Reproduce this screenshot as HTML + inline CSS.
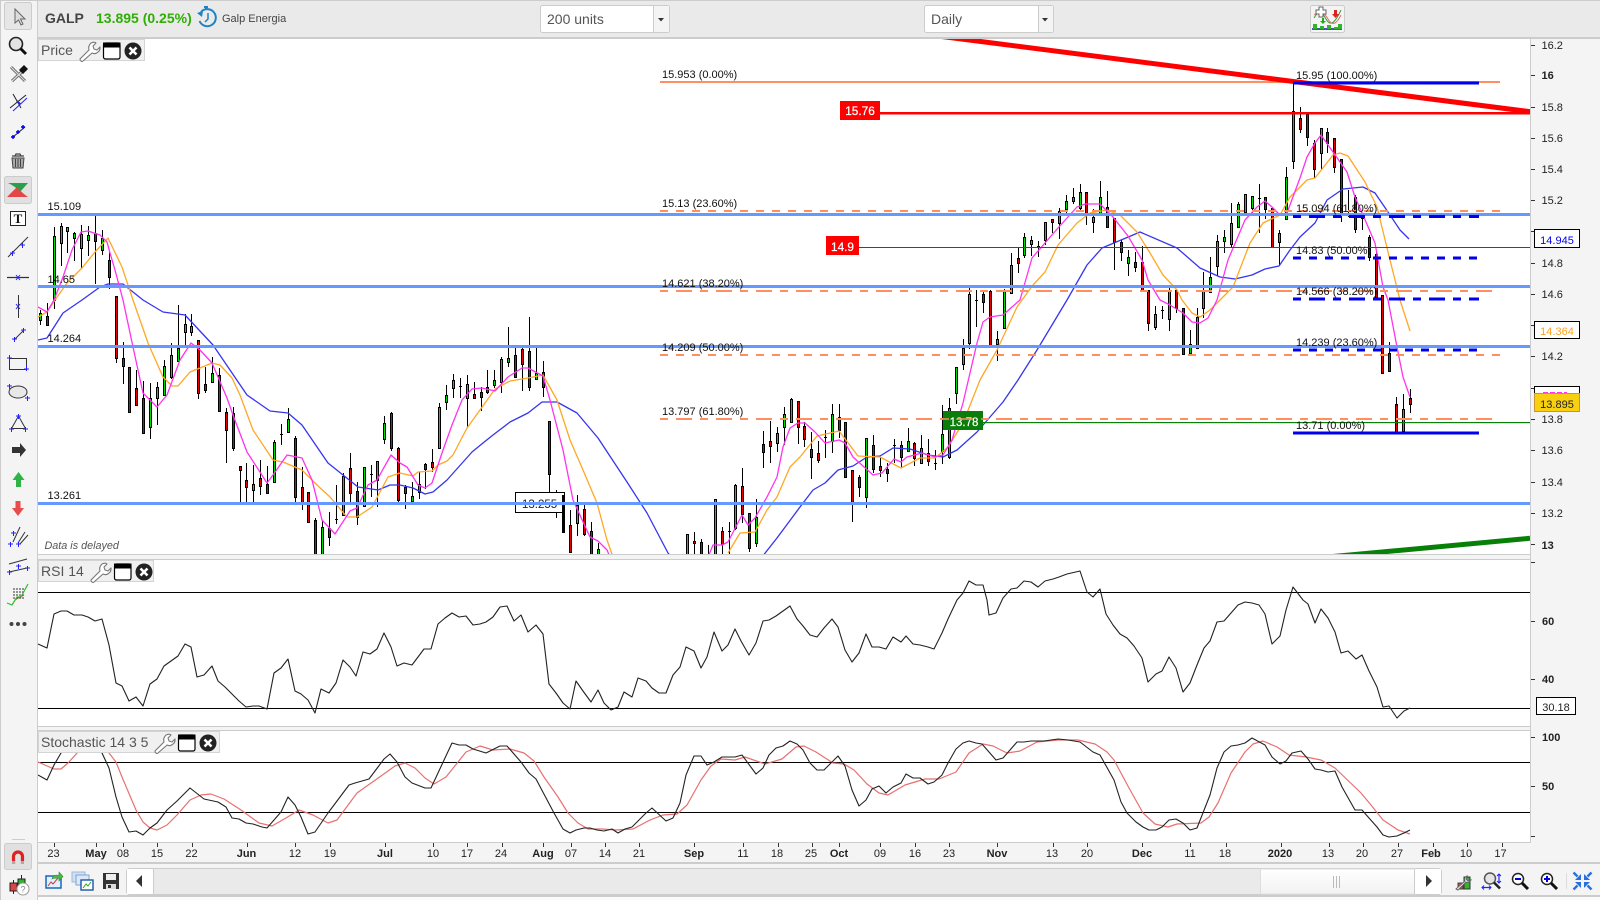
<!DOCTYPE html>
<html><head><meta charset="utf-8"><title>GALP</title>
<style>html,body{margin:0;padding:0;background:#fff;width:1600px;height:900px;overflow:hidden}svg{display:block}text{font-family:"Liberation Sans",sans-serif}</style></head>
<body>
<svg width="1600" height="900" viewBox="0 0 1600 900" xmlns="http://www.w3.org/2000/svg">
<defs>
<clipPath id="cp"><rect x="38" y="39" width="1492" height="515"/></clipPath>
<clipPath id="cs"><rect x="38" y="731" width="1493" height="111"/></clipPath>
<linearGradient id="thumb" x1="0" y1="0" x2="0" y2="1"><stop offset="0" stop-color="#fff"/><stop offset="1" stop-color="#f2f2f2"/></linearGradient>
</defs>
<rect width="1600" height="900" fill="#f4f4f4"/>
<!-- top bar -->
<rect x="38" y="0" width="1562" height="37" fill="#eaeaea"/>
<rect x="0" y="0" width="1600" height="1" fill="#ccc"/>
<rect x="38" y="37" width="1562" height="2" fill="#ccc"/>
<text x="45" y="23" font-size="14" font-weight="bold" fill="#444">GALP</text>
<text x="96" y="23" font-size="14" font-weight="bold" fill="#2fae05">13.895 (0.25%)</text>
<g fill="none" stroke="#1c84c6" stroke-width="2"><path d="M201 12a8.500 8.500 0 1 1-1.500 9"/><path d="M208 13v6l-3 3" stroke-width="1.500"/><path d="M204 7h4M206 7v3"/></g><path d="M197 13l5 4 1-6z" fill="#1c84c6"/>
<text x="222" y="22" font-size="11" fill="#444">Galp Energia</text>
<!-- selects -->
<rect x="540.500" y="5.500" width="129" height="27" rx="2" fill="#fff" stroke="#ccc"/><rect x="653.500" y="6" width="15.500" height="26" fill="#f4f4f4"/><path d="M653.500 5.500v27" stroke="#ccc"/><path d="M658 18h6l-3 3.500z" fill="#333"/>
<text x="547" y="24" font-size="14" fill="#555">200 units</text>
<rect x="924.500" y="5.500" width="129" height="27" rx="2" fill="#fff" stroke="#ccc"/><rect x="1038.500" y="6" width="14.500" height="26" fill="#f4f4f4"/><path d="M1038.500 5.500v27" stroke="#ccc"/><path d="M1042 18h6l-3 3.500z" fill="#333"/>
<text x="931" y="24" font-size="14" fill="#555">Daily</text>
<rect x="1310.500" y="5.500" width="34" height="27" rx="2" fill="#f4f4f4" stroke="#ccc"/>
<path d="M1312 29h30" stroke="#1a1a9a" stroke-width="1.500"/>
<path d="M1313 24h4v5h-4zM1320 26h4v3h-4zM1327 25h4v4h-4zM1334 27h4v2h-4zM1338 24h4v5h-4z" fill="#2db52d"/>
<path d="M1314 18c6-10 8-6 12 1s8 6 15-9" fill="none" stroke="#3a9a3a"/><path d="M1314 15c6-5 10-3 14 4s8 6 13-4" fill="none" stroke="#e87070"/>
<path d="M1316 10h3v-3h4v3h3v4h-3v3h-4v-3h-3z" fill="#fff" stroke="#666"/>
<path d="M1334 10h3v4h2l-3.500 4-3.500-4h2z" fill="#d22"/><path d="M1323 24l-3-3h2v-3h2v3h2z" fill="#2a2"/>
<!-- chart area -->
<rect x="38" y="39" width="1493" height="515" fill="#fff"/>
<g clip-path="url(#cp)">
<g shape-rendering="crispEdges" stroke="#000" stroke-width="1">
<path fill="none" d="M40.500 310V325M47.500 303V326M54.500 227V309M61.500 223V266M67.500 227V253M74.500 232V261M81.500 225V269M88.500 226V256M95.500 216V284M102.500 230V255M109.500 252V289M116.500 296V363M123.500 342V384M129.500 367V413M136.500 370V405M143.500 381V434M150.500 383V439M157.500 382V425M164.500 360V395M171.500 343V379M178.500 305V361M185.500 314V348M191.500 314V336M198.500 340V399M205.500 367V393M212.500 357V382M219.500 368V411M226.500 408V463M233.500 407V451M240.500 466V502M246.500 463V502M253.500 465V502M260.500 460V495M267.500 466V493M274.500 440V483M281.500 424V445M288.500 408V433M295.500 436V502M302.500 467V510M308.500 492V522M315.500 518V554M322.500 521V554M329.500 512V546M336.500 485V524M343.500 473V515M350.500 453V502M357.500 482V525M364.500 467V506M371.500 465V497M377.500 461V507M384.500 416V444M391.500 412V451M398.500 447V502M405.500 485V509M412.500 482V503M419.500 472V499M425.500 463V489M432.500 449V472M439.500 403V448M446.500 385V410M453.500 374V398M460.500 378V398M467.500 375V428M474.500 382V398M481.500 387V411M487.500 370V394M494.500 370V388M501.500 357V393M508.500 327V367M515.500 348V377M522.500 346V391M529.500 317V391M536.500 348V380M543.500 361V397M549.500 421V500M556.500 490V518M563.500 495V532M570.500 510V552M577.500 495V536M584.500 502V536M591.500 522V554M598.500 543V554M687.500 534V554M694.500 532V554M701.500 539V554M708.500 545V554M715.500 499V554M722.500 527V554M729.500 522V554M735.500 484V530M742.500 468V523M749.500 513V552M756.500 499V547M763.500 431V468M770.500 421V463M777.500 427V452M784.500 407V445M791.500 398V423M798.500 401V444M804.500 422V447M811.500 432V479M818.500 441V463M825.500 430V458M832.500 404V453M839.500 404V438M845.500 422V477M852.500 470V522M859.500 475V497M866.500 438V508M873.500 435V473M880.500 457V477M887.500 463V482M894.500 439V463M901.500 441V468M908.500 428V452M914.500 442V466M921.500 435V463M928.500 439V466M935.500 450V470M942.500 405V464M949.500 398V459M956.500 367V404M963.500 339V370M969.500 288V349M976.500 290V327M983.500 290V313M990.500 290V345M997.500 331V361M1004.500 289V328M1011.500 253V294M1018.500 248V273M1024.500 233V258M1031.500 236V256M1038.500 241V257M1045.500 222V245M1052.500 219V233M1059.500 208V239M1066.500 195V213M1073.500 188V204M1080.500 184V212M1086.500 192V225M1093.500 209V233M1100.500 181V213M1107.500 191V228M1114.500 218V270M1121.500 240V261M1128.500 250V276M1135.500 252V272M1142.500 246V289M1148.500 290V331M1155.500 306V330M1162.500 306V319M1169.500 288V331M1176.500 290V313M1183.500 308V355M1190.500 330V353M1197.500 308V349M1203.500 272V318M1210.500 257V292M1217.500 235V276M1224.500 230V253M1231.500 203V247M1238.500 202V227M1245.500 194V212M1252.500 196V213M1259.500 184V233M1265.500 197V219M1272.500 208V247M1279.500 230V266M1286.500 167V220M1293.500 82V169M1300.500 107V133M1307.500 113V146M1314.500 140V178M1321.500 128V169M1327.500 128V153M1334.500 138V173M1341.500 159V222M1348.500 190V217M1355.500 195V233M1362.500 217V230M1369.500 235V261M1376.500 252V297M1382.500 295V373M1389.500 342V372M1396.500 397V432M1403.500 394V431M1410.500 389V413"/>
<path fill="none" d="M280 434.500h3M335 519.500h3M370 474.500h3M459 386.500h3M555 494.500h3M728 531.500h3M824 437.500h3M893 445.500h3M934 463.500h3M975 300.500h3M1037 246.500h3M1161 310.500h3M1258 198.500h3M1347 213.500h3M1361 218.500h3"/>
<path fill="#00dd00" d="M39.500 313.500h2v7h-2zM53.500 236.500h2v64h-2zM60.500 226.500h2v17h-2zM66.500 227.500h2v4h-2zM73.500 233.500h2v5h-2zM80.500 234.500h2v14h-2zM87.500 235.500h2v5h-2zM101.500 238.500h2v12h-2zM149.500 398.500h2v29h-2zM156.500 387.500h2v11h-2zM163.500 366.500h2v29h-2zM170.500 355.500h2v22h-2zM177.500 348.500h2v13h-2zM184.500 324.500h2v8h-2zM190.500 326.500h2v6h-2zM211.500 373.500h2v9h-2zM252.500 484.500h2v6h-2zM273.500 442.500h2v40h-2zM287.500 419.500h2v13h-2zM321.500 527.500h2v27h-2zM342.500 476.500h2v39h-2zM363.500 467.500h2v39h-2zM376.500 461.500h2v19h-2zM383.500 423.500h2v16h-2zM411.500 496.500h2v5h-2zM418.500 484.500h2v8h-2zM438.500 407.500h2v41h-2zM445.500 395.500h2v7h-2zM452.500 380.500h2v8h-2zM466.500 384.500h2v14h-2zM493.500 380.500h2v5h-2zM500.500 359.500h2v23h-2zM507.500 358.500h2v4h-2zM535.500 373.500h2v6h-2zM576.500 505.500h2v18h-2zM597.500 549.500h2v5h-2zM686.500 534.500h2v20h-2zM714.500 499.500h2v55h-2zM734.500 485.500h2v43h-2zM755.500 517.500h2v26h-2zM776.500 433.500h2v10h-2zM783.500 414.500h2v13h-2zM790.500 399.500h2v23h-2zM831.500 414.500h2v27h-2zM865.500 438.500h2v59h-2zM907.500 441.500h2v10h-2zM920.500 448.500h2v15h-2zM941.500 434.500h2v17h-2zM948.500 408.500h2v49h-2zM955.500 367.500h2v26h-2zM962.500 348.500h2v16h-2zM968.500 294.500h2v49h-2zM996.500 339.500h2v5h-2zM1003.500 290.500h2v38h-2zM1010.500 265.500h2v28h-2zM1023.500 237.500h2v18h-2zM1030.500 240.500h2v4h-2zM1044.500 222.500h2v18h-2zM1058.500 211.500h2v12h-2zM1065.500 201.500h2v8h-2zM1072.500 197.500h2v4h-2zM1079.500 192.500h2v16h-2zM1092.500 217.500h2v5h-2zM1099.500 197.500h2v16h-2zM1127.500 257.500h2v6h-2zM1154.500 314.500h2v13h-2zM1168.500 290.500h2v29h-2zM1189.500 344.500h2v9h-2zM1196.500 317.500h2v31h-2zM1202.500 290.500h2v18h-2zM1209.500 277.500h2v15h-2zM1216.500 241.500h2v25h-2zM1223.500 237.500h2v4h-2zM1230.500 223.500h2v21h-2zM1237.500 204.500h2v23h-2zM1244.500 194.500h2v18h-2zM1251.500 196.500h2v12h-2zM1278.500 233.500h2v9h-2zM1285.500 177.500h2v42h-2zM1292.500 111.500h2v50h-2zM1320.500 128.500h2v25h-2zM1402.500 409.500h2v22h-2z"/>
<path fill="#e80000" d="M46.500 316.500h2v9h-2zM94.500 233.500h2v8h-2zM108.500 260.500h2v17h-2zM115.500 296.500h2v62h-2zM122.500 358.500h2v8h-2zM128.500 367.500h2v45h-2zM135.500 388.500h2v17h-2zM142.500 398.500h2v35h-2zM197.500 340.500h2v53h-2zM204.500 384.500h2v6h-2zM218.500 375.500h2v36h-2zM225.500 412.500h2v18h-2zM232.500 413.500h2v35h-2zM239.500 466.500h2v4h-2zM245.500 480.500h2v7h-2zM259.500 478.500h2v8h-2zM266.500 484.500h2v9h-2zM294.500 438.500h2v59h-2zM301.500 487.500h2v16h-2zM307.500 492.500h2v30h-2zM314.500 520.500h2v34h-2zM328.500 528.500h2v9h-2zM349.500 468.500h2v25h-2zM356.500 491.500h2v26h-2zM390.500 413.500h2v35h-2zM397.500 448.500h2v52h-2zM404.500 487.500h2v6h-2zM424.500 464.500h2v5h-2zM431.500 462.500h2v5h-2zM473.500 394.500h2v4h-2zM480.500 392.500h2v5h-2zM486.500 387.500h2v5h-2zM514.500 355.500h2v22h-2zM521.500 349.500h2v15h-2zM528.500 351.500h2v36h-2zM542.500 372.500h2v15h-2zM548.500 421.500h2v53h-2zM562.500 495.500h2v37h-2zM569.500 525.500h2v27h-2zM583.500 509.500h2v25h-2zM590.500 531.500h2v23h-2zM693.500 541.500h2v2h-2zM700.500 542.500h2v12h-2zM721.500 531.500h2v13h-2zM741.500 486.500h2v28h-2zM748.500 513.500h2v35h-2zM762.500 444.500h2v8h-2zM769.500 441.500h2v5h-2zM797.500 401.500h2v26h-2zM803.500 426.500h2v13h-2zM810.500 449.500h2v8h-2zM817.500 453.500h2v7h-2zM838.500 417.500h2v13h-2zM844.500 422.500h2v55h-2zM851.500 470.500h2v32h-2zM858.500 477.500h2v10h-2zM872.500 445.500h2v24h-2zM879.500 466.500h2v4h-2zM886.500 469.500h2v4h-2zM900.500 445.500h2v12h-2zM913.500 443.500h2v15h-2zM927.500 453.500h2v8h-2zM982.500 294.500h2v8h-2zM989.500 291.500h2v54h-2zM1017.500 258.500h2v5h-2zM1051.500 219.500h2v3h-2zM1085.500 192.500h2v21h-2zM1106.500 207.500h2v20h-2zM1113.500 218.500h2v24h-2zM1120.500 242.500h2v10h-2zM1134.500 262.500h2v5h-2zM1141.500 262.500h2v28h-2zM1147.500 290.500h2v33h-2zM1175.500 290.500h2v18h-2zM1182.500 308.500h2v46h-2zM1264.500 197.500h2v12h-2zM1271.500 208.500h2v39h-2zM1299.500 118.500h2v11h-2zM1306.500 114.500h2v23h-2zM1313.500 143.500h2v26h-2zM1326.500 132.500h2v11h-2zM1333.500 138.500h2v29h-2zM1340.500 159.500h2v54h-2zM1354.500 197.500h2v32h-2zM1368.500 237.500h2v20h-2zM1375.500 254.500h2v43h-2zM1381.500 295.500h2v78h-2zM1388.500 353.500h2v18h-2zM1395.500 404.500h2v28h-2zM1409.500 398.500h2v6h-2z"/>
</g>
<!-- moving averages -->
<g fill="none" stroke-width="1.300" stroke-linejoin="round">
<path stroke="#3535f0" d="M38 340L47 338L63 313L82 300L100 287L108 284L123 284L143 300L163 312L185 315L213 345L247 395L270 411L288 413L302 425L328 463L343 475L358 487L378 490L390 485L400 485L413 488L425 494L433 492L447 480L472 452L483 443L493 435L510 422L528 413L542 402L557 402L577 413L598 438L627 482L647 513L668 553L672 558M762 557L777 538L800 507L813 490L825 483L838 470L853 466L867 457L880 456L893 448L910 449L928 455L943 457L957 450L977 432L1003 402L1018 380L1037 350L1067 300L1087 265L1102 248L1133 235L1140 232L1177 248L1200 268L1220 277L1235 279L1252 275L1265 269L1279 266L1290 250L1300 237L1315 223L1327 200L1343 189L1363 187L1375 193L1388 212L1400 230L1409 239"/>
<path stroke="#ffa726" d="M38 317L47 312L55 300L67 283L82 268L95 252L108 238L122 267L133 300L148 343L163 377L172 386L178 386L190 372L200 368L212 363L220 365L232 378L240 395L253 430L273 460L283 462L302 470L317 485L330 497L347 517L357 517L372 507L388 477L400 473L413 476L418 472L432 471L438 465L447 461L453 455L467 428L480 410L495 389L510 381L528 378L543 375L557 400L570 440L583 470L597 503L607 540L613 557M728 553L740 533L755 532L767 510L777 497L790 467L800 457L817 436L839 431L858 456L880 457L901 468L920 458L935 458L948 447L963 423L980 380L997 350L1017 307L1022 300L1033 285L1045 272L1058 245L1077 223L1090 213L1107 210L1120 215L1137 232L1150 253L1163 275L1177 290L1182 300L1192 313L1200 317L1210 310L1220 300L1233 287L1250 243L1263 223L1280 215L1290 197L1307 180L1315 178L1333 155L1340 153L1348 156L1365 182L1377 207L1390 260L1400 300L1410 331"/>
<path stroke="#ff33ee" d="M38 307L47 312L54 300L63 277L72 250L81 232L88 231L100 235L107 242L110 253L115 270L123 300L133 347L143 393L157 407L167 395L180 360L191 343L200 350L212 363L227 398L233 415L247 452L267 483L273 475L287 455L302 458L312 480L322 520L335 534L350 511L357 508L368 485L377 480L391 455L400 463L407 467L418 485L425 488L432 483L442 453L452 425L462 400L472 389L482 388L495 391L508 377L522 368L528 368L543 376L550 400L563 450L573 500L590 537L598 541L607 550L610 557M708 557L713 545L722 545L728 542L742 515L748 525L755 518L767 497L777 477L783 447L790 428L798 423L805 423L815 432L825 443L839 440L845 443L853 457L873 475L882 473L894 459L901 462L907 457L922 453L935 457L943 455L952 440L963 403L970 373L977 343L983 322L990 317L1003 315L1020 300L1032 258L1058 228L1077 207L1085 204L1100 204L1113 217L1128 236L1142 260L1148 280L1160 300L1170 305L1183 313L1192 322L1200 323L1208 318L1217 300L1228 260L1245 220L1257 207L1265 201L1272 207L1280 215L1287 213L1300 178L1307 157L1315 143L1321 135L1333 152L1347 172L1355 197L1363 215L1375 243L1383 287L1388 300L1397 347L1403 377L1410 397"/>
</g>
<!-- 13.255 box -->
<rect x="515.500" y="492.500" width="49" height="20" fill="#fff" stroke="#000"/>
<text x="522" y="508" font-size="11.500" fill="#222">13.255</text>
<path d="M563.500 495V532" stroke="#000"/><rect x="562" y="495" width="3" height="18" fill="#000"/>
<!-- red / green horizontal -->
<rect x="880" y="112" width="650" height="2.500" fill="#f00"/>
<rect x="859" y="247" width="671" height="1" fill="#e00"/>
<rect x="983" y="422" width="547" height="1.200" fill="#0a7d0a"/>
<!-- orange fib -->
<g fill="none" stroke="#ff8f5f" stroke-width="2">
<path d="M660 82H1500"/>
<path d="M660 211H1500" stroke-dasharray="8 8"/>
<path d="M660 291H1492" stroke-dasharray="8 8 16 8"/>
<path d="M660 355H1500" stroke-dasharray="8 8"/>
<path d="M660 419H1492" stroke-dasharray="8 8 16 8"/>
</g>
<!-- labels red green -->
<rect x="840" y="101" width="40" height="19" fill="#f00"/><text x="860" y="115" font-size="11.800" stroke="#fff" stroke-width=".25" fill="#fff" text-anchor="middle">15.76</text>
<rect x="826" y="236" width="33" height="19" fill="#f00"/><text x="842.500" y="251" font-size="11.800" stroke="#fff" stroke-width=".25" fill="#fff" text-anchor="middle">14.9</text>
<rect x="943" y="411" width="40" height="19" fill="#0a7d0a"/><text x="964" y="426" font-size="11.500" stroke="#fff" stroke-width=".2" fill="#fff" text-anchor="middle">13.78</text>
<path d="M943 419h6m8 0h16m8 0h8" stroke="#ff8f5f" stroke-width="2" opacity=".75"/>
<!-- light-blue horizontal -->
<g fill="#6699ff"><rect x="38" y="213" width="1492" height="3"/><rect x="38" y="285" width="1492" height="3"/><rect x="38" y="345" width="1492" height="3"/><rect x="38" y="502" width="1492" height="3"/></g>
<!-- trends -->
<path d="M930 35L1530 111.700" stroke="#f00" stroke-width="5" fill="none"/>
<path d="M1320 557.700L1530 538.300" stroke="#088008" stroke-width="5" fill="none"/>
<!-- blue fib -->
<g fill="none" stroke="#0000ee" stroke-width="3">
<path d="M1293 83H1479"/>
<path d="M1293 216.500H1479" stroke-dasharray="8 8 16 8"/>
<path d="M1293 258H1479" stroke-dasharray="8 8"/>
<path d="M1293 299H1479" stroke-dasharray="8 8 16 8"/>
<path d="M1293 350H1479" stroke-dasharray="8 8"/>
<path d="M1293 433H1479"/>
</g>
<!-- text labels -->
<g font-size="11" fill="#111">
<text x="47.500" y="210">15.109</text><text x="47.500" y="283">14.65</text><text x="47.500" y="342">14.264</text><text x="47.500" y="499">13.261</text>
<text x="662" y="78">15.953 (0.00%)</text><text x="662" y="207">15.13 (23.60%)</text><text x="662" y="287">14.621 (38.20%)</text><text x="662" y="351">14.209 (50.00%)</text><text x="662" y="415">13.797 (61.80%)</text>
<text x="1296" y="79">15.95 (100.00%)</text><text x="1296" y="212">15.094 (61.80%)</text><text x="1296" y="254">14.83 (50.00%)</text><text x="1296" y="295">14.566 (38.20%)</text><text x="1296" y="346">14.239 (23.60%)</text><text x="1296" y="429">13.71 (0.00%)</text>
</g>
<text x="44.500" y="549" font-size="10.800" font-style="italic" fill="#555">Data is delayed</text>
</g>
<!-- panel frames -->
<rect x="38" y="554" width="1493" height="6" fill="#f4f4f4"/>
<rect x="38" y="554" width="1493" height="1" fill="#ccc"/><rect x="38" y="559" width="1493" height="1" fill="#ccc"/>
<rect x="38" y="560" width="1493" height="166" fill="#fff"/>
<rect x="38" y="726" width="1493" height="5" fill="#f4f4f4"/>
<rect x="38" y="726" width="1493" height="1" fill="#ccc"/><rect x="38" y="730" width="1493" height="1" fill="#ccc"/>
<rect x="38" y="731" width="1493" height="111" fill="#fff"/>
<rect x="1530" y="39" width="1" height="803" fill="#ccc"/>
<rect x="37" y="0" width="1" height="900" fill="#ccc"/>
<rect x="0" y="0" width="1" height="900" fill="#ccc"/>
<!-- RSI -->
<g fill="none" stroke="#000" stroke-width="1">
<path d="M38 592.500H1530M38 708.500H1530"/>
<path stroke="#222" stroke-width="1.100" stroke-linejoin="round" d="M38 644L47 648L54 614L61 611L67 611L74 615L82 615L88 617L95 621L102 619L109 645L116 683L122 686L129 701L136 697L143 706L150 684L157 679L164 666L171 661L178 656L185 644L191 647L197 677L204 675L212 666L218 681L225 687L232 694L239 701L246 707L253 706L259 706L267 709L274 673L281 668L288 659L295 691L301 694L308 700L315 713L321 689L329 693L336 683L343 660L350 667L356 676L363 652L370 654L377 649L384 633L391 647L397 666L404 663L412 665L418 657L424 649L431 649L438 624L445 618L452 613L459 617L466 616L473 625L480 624L486 622L493 617L500 607L507 606L514 621L521 615L528 632L536 625L543 634L549 684L556 693L563 703L570 709L576 681L583 691L591 702L598 690L604 703L611 710L618 707L624 692L632 697L638 678L646 681L652 688L659 693L666 693L673 675L680 667L686 647L694 651L701 668L707 657L714 632L722 651L728 645L735 629L741 641L749 655L756 643L763 621L769 620L776 616L783 611L790 606L797 619L803 626L810 635L817 637L824 628L832 619L838 627L845 650L852 662L859 653L866 634L872 647L879 647L886 649L893 637L901 642L906 636L913 644L920 645L928 647L934 649L942 633L948 619L957 600L963 593L969 581L976 585L983 585L987 600L989 615L996 613L1003 598L1011 589L1017 588L1024 581L1031 582L1038 587L1045 581L1053 579L1059 577L1067 574L1080 571L1087 592L1093 597L1100 589L1106 614L1113 625L1120 634L1127 638L1134 646L1142 658L1148 682L1156 674L1162 671L1169 657L1176 668L1183 692L1190 683L1197 665L1204 648L1210 641L1217 622L1224 621L1231 613L1238 605L1245 602L1252 603L1259 605L1265 614L1272 644L1280 636L1286 610L1293 587L1303 600L1308 604L1315 623L1321 609L1328 618L1335 632L1341 653L1348 651L1356 659L1362 655L1369 671L1377 687L1383 707L1389 706L1397 718L1404 711L1410 708"/>
</g>
<!-- Stochastic -->
<g clip-path="url(#cs)" fill="none">
<path stroke="#000" d="M38 762.500H1530M38 812.500H1530"/>
<path stroke="#e87070" stroke-width="1.200" stroke-linejoin="round" d="M38 762L54 769L61 769L68 763L78 752L90 738L100 742L109 753L116 762L122 777L136 810L143 822L150 828L157 830L167 825L177 815L190 800L201 795L211 794L224 799L241 810L259 823L272 826L286 818L299 810L313 815L328 823L337 820L357 793L381 776L395 766L405 763L415 768L425 778L434 784L446 777L466 752L480 746L493 750L510 749L524 753L534 761L544 777L558 797L568 813L578 823L588 829L602 829L616 830L633 829L650 820L663 815L677 814L687 805L701 780L711 766L721 759L735 760L745 757L765 764L782 759L796 747L804 746L816 752L833 763L844 764L854 770L867 784L879 793L888 795L905 785L925 779L939 779L956 772L969 753L983 744L993 746L1007 753L1020 751L1037 742L1058 740L1078 740L1095 744L1107 752L1114 760L1129 788L1143 813L1155 824L1168 827L1177 824L1201 823L1209 817L1218 803L1231 773L1245 752L1253 744L1263 741L1277 747L1289 755L1306 757L1321 760L1335 768L1361 793L1371 805L1383 820L1398 830L1410 834"/>
<path stroke="#222" stroke-width="1.100" stroke-linejoin="round" d="M38 775L47 780L54 765L61 753L68 747L80 735L90 736L99 750L102 753L109 768L116 797L122 817L129 832L136 831L143 835L150 828L157 823L167 810L177 801L190 788L204 799L218 802L226 807L232 818L239 819L246 823L253 824L262 827L267 828L281 812L288 797L295 805L301 817L308 834L315 832L328 813L349 785L355 783L369 779L384 759L390 754L397 762L405 777L412 783L425 788L431 788L452 743L459 745L466 745L473 749L486 753L500 746L507 746L521 762L529 773L536 779L554 813L563 829L570 833L576 830L584 828L590 828L597 830L604 831L612 829L618 833L625 829L632 827L646 813L652 808L666 821L673 818L680 803L686 775L694 756L701 756L707 765L714 762L722 757L735 757L742 755L756 774L763 768L769 755L776 748L783 746L790 741L797 744L803 750L810 763L817 770L824 770L832 762L838 756L845 766L852 790L859 806L866 800L872 789L879 786L886 793L893 787L901 783L906 774L913 778L920 778L928 784L934 782L942 775L948 763L956 749L963 743L969 741L976 743L982 744L996 760L1003 758L1017 742L1024 742L1031 741L1044 741L1058 739L1068 740L1080 742L1093 752L1100 755L1114 780L1121 802L1127 813L1136 822L1143 827L1149 830L1156 830L1162 827L1169 820L1176 819L1183 823L1190 830L1197 828L1210 795L1217 768L1224 752L1231 746L1238 745L1245 743L1252 738L1265 745L1272 757L1280 764L1286 761L1292 753L1301 751L1308 759L1315 769L1321 770L1328 772L1335 771L1342 787L1355 810L1362 810L1369 818L1377 827L1383 835L1389 837L1397 836L1404 833L1410 830"/>
</g>
<!-- price axis -->
<rect x="1531" y="39" width="69" height="803" fill="#f4f4f4"/>
<path stroke="#333" d="M1531 45.500h4M1531 75.500h4M1531 107.500h4M1531 138.500h4M1531 169.500h4M1531 200.500h4M1531 231.500h4M1531 263.500h4M1531 294.500h4M1531 325.500h4M1531 356.500h4M1531 388.500h4M1531 419.500h4M1531 450.500h4M1531 482.500h4M1531 513.500h4M1531 544.500h4M1531 562.500h4M1531 621.500h4M1531 679.500h4M1531 737.500h4M1531 786.500h4M1531 836.500h4"/>
<g font-size="11" fill="#222">
<text x="1541.500" y="49">16.2</text><text x="1541.500" y="79" font-weight="bold">16</text><text x="1541.500" y="111">15.8</text><text x="1541.500" y="142">15.6</text><text x="1541.500" y="173">15.4</text><text x="1541.500" y="204">15.2</text><text x="1541.500" y="267">14.8</text><text x="1541.500" y="298">14.6</text><text x="1541.500" y="360">14.2</text><text x="1541.500" y="423">13.8</text><text x="1541.500" y="454">13.6</text><text x="1541.500" y="486">13.4</text><text x="1541.500" y="517">13.2</text><text x="1541.500" y="549" font-weight="bold">13</text>
<text x="1542" y="625" font-weight="bold">60</text><text x="1542" y="683" font-weight="bold">40</text><text x="1542" y="741" font-weight="bold">100</text><text x="1542" y="790" font-weight="bold">50</text>
</g>
<rect x="1534.500" y="229.500" width="45" height="18" fill="#fff" stroke="#000"/><text x="1557" y="244" font-size="11" fill="#0000ee" text-anchor="middle">14.945</text>
<rect x="1534.500" y="321.500" width="45" height="17" fill="#fff" stroke="#000"/><text x="1557" y="335" font-size="11" fill="#ffa020" text-anchor="middle">14.364</text>
<rect x="1534.500" y="386.500" width="45" height="12" fill="#fff" stroke="#000"/><path d="M1543 393h24" stroke="#ff33ee" stroke-dasharray="5 2" stroke-width="2"/>
<rect x="1534.500" y="393.500" width="45" height="18" fill="#f8d010" stroke="#c9962e"/><text x="1557" y="408" font-size="11" fill="#222" text-anchor="middle">13.895</text>
<rect x="1536.500" y="697.500" width="39" height="17" fill="#fff" stroke="#000"/><text x="1556" y="711" font-size="11" fill="#222" text-anchor="middle">30.18</text>
<!-- x axis -->
<rect x="38" y="842" width="1562" height="20" fill="#f4f4f4"/>
<rect x="38" y="842" width="1493" height="1" fill="#ccc"/>
<rect x="38" y="862" width="1562" height="2" fill="#ccc"/>
<path stroke="#333" d="M54.500 843v4M96.500 843v4M123.500 843v4M157.500 843v4M192.500 843v4M247.500 843v4M295.500 843v4M330.500 843v4M385.500 843v4M433.500 843v4M467.500 843v4M502.500 843v4M543.500 843v4M571.500 843v4M605.500 843v4M639.500 843v4M694.500 843v4M743.500 843v4M778.500 843v4M812.500 843v4M839.500 843v4M880.500 843v4M915.500 843v4M949.500 843v4M997.500 843v4M1053.500 843v4M1087.500 843v4M1142.500 843v4M1190.500 843v4M1226.500 843v4M1281.500 843v4M1329.500 843v4M1363.500 843v4M1398.500 843v4M1433.500 843v4M1467.500 843v4M1502.500 843v4"/>
<g font-size="11" fill="#222" text-anchor="middle">
<text x="53.500" y="857">23</text><text x="96" y="857" font-weight="bold">May</text><text x="123" y="857">08</text><text x="157" y="857">15</text><text x="191.500" y="857">22</text><text x="246.500" y="857" font-weight="bold">Jun</text><text x="295" y="857">12</text><text x="330" y="857">19</text><text x="385" y="857" font-weight="bold">Jul</text><text x="433" y="857">10</text><text x="467" y="857">17</text><text x="501" y="857">24</text><text x="543" y="857" font-weight="bold">Aug</text><text x="571" y="857">07</text><text x="605" y="857">14</text><text x="639" y="857">21</text><text x="694" y="857" font-weight="bold">Sep</text><text x="743" y="857">11</text><text x="777" y="857">18</text><text x="811" y="857">25</text><text x="839" y="857" font-weight="bold">Oct</text><text x="880" y="857">09</text><text x="915" y="857">16</text><text x="949" y="857">23</text><text x="997" y="857" font-weight="bold">Nov</text><text x="1052" y="857">13</text><text x="1087" y="857">20</text><text x="1142" y="857" font-weight="bold">Dec</text><text x="1190" y="857">11</text><text x="1225" y="857">18</text><text x="1280" y="857" font-weight="bold">2020</text><text x="1328" y="857">13</text><text x="1362" y="857">20</text><text x="1397" y="857">27</text><text x="1431" y="857" font-weight="bold">Feb</text><text x="1466" y="857">10</text><text x="1500.500" y="857">17</text>
</g>
<!-- tabs -->
<g fill="#f0f0f0" stroke="#d4d4d4"><rect x="38.500" y="39.500" width="106" height="21"/><rect x="38.500" y="560.500" width="115" height="21"/><rect x="38.500" y="731.500" width="181" height="21"/></g>
<text x="41" y="55" font-size="14" fill="#555">Price</text>
<text x="41" y="576" font-size="14" fill="#555">RSI 14</text>
<text x="41" y="747" font-size="14" fill="#555">Stochastic 14 3 5</text>
<g fill="#fff" stroke="#777" stroke-width="1.100" stroke-linejoin="round">
<path d="M80 59l9-9c-1-3 0-5 2-7 2-1 4-1 5 0l-3 3 1 3 3 1 3-3c0 2 0 4-2 5-2 2-4 2-6 1l-9 8c-1 1-3 0-3-2z"/>
<path d="M91 580l9-9c-1-3 0-5 2-7 2-1 4-1 5 0l-3 3 1 3 3 1 3-3c0 2 0 4-2 5-2 2-4 2-6 1l-9 8c-1 1-3 0-3-2z"/>
<path d="M155 751l9-9c-1-3 0-5 2-7 2-1 4-1 5 0l-3 3 1 3 3 1 3-3c0 2 0 4-2 5-2 2-4 2-6 1l-9 8c-1 1-3 0-3-2z"/>
</g>
<g fill="#fff" stroke="#000" stroke-width="1.200"><rect x="103.500" y="43" width="16.500" height="16" rx="2"/><rect x="114.500" y="564" width="16.500" height="16" rx="2"/><rect x="178.500" y="735" width="16.500" height="16" rx="2"/></g>
<g fill="#000"><rect x="103" y="42.500" width="17.500" height="5"/><rect x="114" y="563.500" width="17.500" height="5"/><rect x="178" y="734.500" width="17.500" height="5"/></g>
<g fill="#222"><circle cx="133" cy="51" r="8.500"/><circle cx="144" cy="572" r="8.500"/><circle cx="208" cy="743" r="8.500"/></g>
<g stroke="#fff" stroke-width="2.600"><path d="M129.500 47.500l7 7m0-7l-7 7M140.500 568.500l7 7m0-7l-7 7M204.500 739.500l7 7m0-7l-7 7"/></g>
<!-- sidebar icons -->
<rect x="4.500" y="2.500" width="27" height="27" rx="2" fill="#e6e6e6" stroke="#ccc"/>
<path d="M15 9V23L18.500 20L21 25L23 24L20.500 19H25Z" fill="#ddd" stroke="#666"/>
<circle cx="16" cy="44" r="6.500" fill="#e4e4e4" stroke="#222" stroke-width="1.600"/><path d="M20.500 48.500L26 54" stroke="#111" stroke-width="3"/>
<path d="M11 67l14 14M26 68L12 81" stroke="#666" stroke-width="3"/><path d="M11 67l14 14M26 68L12 81" stroke="#ddd" stroke-width="1.200"/><path d="M19 70l5-5 4 4-5 5z" fill="#111"/>
<path d="M10 108L26 95M13 94l8 14" stroke="#222" fill="none"/><path d="M13 111L27 98" stroke="#22f"/><path d="M17 101l3 3" stroke="#22f" stroke-width="2"/>
<path d="M13 137L25 127" stroke="#222"/><path d="M11 137h4M13 135v4M16 132h4M18 130v4M21 127h4M23 125v4" stroke="#00e" stroke-width="1.400"/>
<path d="M12 156h12M15 156l1-2h4l1 2" stroke="#444" fill="none" stroke-width="1.300"/><path d="M12 158h12l-1 10h-10z" fill="#aaa" stroke="#444"/><path d="M15.500 159v8M18 159v8M20.500 159v8" stroke="#444"/>
<rect x="4.500" y="176.500" width="27" height="27" rx="2" fill="#e0e0e0" stroke="#ccc"/>
<path d="M8 183H28L20 192Q15 186 8 183Z" fill="#2a9f4a"/><path d="M7 197L17 187Q22 193 28 197Z" fill="#e44545"/>
<rect x="10.500" y="211.500" width="15" height="14" fill="#fff" stroke="#222"/><text x="18" y="223" font-size="13" font-weight="bold" text-anchor="middle" fill="#111" style="font-family:'Liberation Serif',serif">T</text>
<path d="M8 257L28 237" stroke="#333"/><path d="M10 253h5M12.500 251v5M20 245h5M22.500 243v5" stroke="#22f"/>
<path d="M7 277.500H29" stroke="#333" stroke-width="1.300"/><path d="M16 275l4 5M20 275l-4 5" stroke="#22f"/>
<path d="M18.500 295V318" stroke="#333"/><path d="M16 304l4 5M20 304l-4 5" stroke="#22f"/>
<path d="M14 340L24 330" stroke="#333"/><path d="M12 339h5M14.500 337v5M21 330h5M23.500 328v5" stroke="#22f"/>
<rect x="9.500" y="358.500" width="17" height="11" fill="none" stroke="#333"/><path d="M7 358h5M9.500 355v5M24 369h5M26.500 366v5" stroke="#22f"/>
<ellipse cx="18" cy="392" rx="9" ry="6" fill="#e8e8e8" stroke="#333"/><path d="M7 386h5M9.500 384v5M25 398h5M27.500 396v5" stroke="#22f"/>
<path d="M18.500 416L11.500 428.500H25.500Z" fill="none" stroke="#333"/><path d="M16 416h5M18.500 414v5M9 429h5M11.500 427v5M23 429h5M25.500 427v5" stroke="#22f"/>
<path d="M12 447h8v-4l6 7-6 7v-4h-8z" fill="#333"/>
<path d="M18.500 472l6 8h-3.500v7h-5v-7h-3.500z" fill="#2fb344"/>
<path d="M15.500 501h5v7h3.500l-6 8-6-8h3.500z" fill="#e84c4c"/>
<path d="M13 542L20 527M18 543L25 532M20 544L28 535" stroke="#333" fill="none"/><path d="M11 533h5M13.500 531v5M8 544h5M10.500 542v5M16 544h5M18.500 542v5" stroke="#22f"/>
<path d="M9 564L27 559M9 572L27 568" stroke="#333" fill="none"/><path d="M7 572h5M9.500 570v5M16 566h5M18.500 564v5M25 568h5M27.500 566v5" stroke="#22f"/>
<path d="M13 589h12M13 592h12M13 595h12M13 598h12" stroke="#333" stroke-dasharray="2 1"/><path d="M15 600l5-3 4-2" stroke="#d33" fill="none"/><path d="M7 603l5 2 5-8 4 0 7-13" stroke="#3b3" fill="none" stroke-width="1.200"/>
<g fill="#444"><circle cx="11.500" cy="624" r="2"/><circle cx="18" cy="624" r="2"/><circle cx="24.500" cy="624" r="2"/></g>
<path d="M12 839.500H25" stroke="#ccc"/>
<rect x="4.500" y="843.500" width="27" height="26" rx="2" fill="#e0e0e0" stroke="#ccc"/>
<path d="M13.500 861V856.500a4.500 4.500 0 0 1 9 0V861" fill="none" stroke="#d22" stroke-width="3.200"/><path d="M12 861h3.200v3h-3.200zM20.800 861h3.200v3h-3.200z" fill="#aaa"/>
<path d="M21.500 875v15" stroke="#222"/><rect x="18" y="879" width="7" height="9" fill="#2db52d" stroke="#222"/><path d="M13.500 880v14" stroke="#222"/><rect x="10" y="883" width="7" height="8" fill="#d44" stroke="#222"/>
<circle cx="23" cy="889" r="6" fill="#fff" stroke="#999"/><text x="23" y="892.500" font-size="9" fill="#888" text-anchor="middle">?</text>
<!-- bottom toolbar -->
<rect x="38" y="864" width="1562" height="31" fill="#f4f4f4"/>
<rect x="38" y="895" width="1562" height="2" fill="#ccc"/>
<rect x="38" y="897" width="1562" height="3" fill="#fafafa"/>
<rect x="126.500" y="868.500" width="1315" height="26" rx="3" fill="#eaeaea" stroke="#ccc"/>
<rect x="127" y="869" width="26" height="25" fill="#fff"/><path d="M153.500 869v25" stroke="#ccc"/><path d="M142 875v12l-6-6z" fill="#333"/>
<rect x="1260.500" y="869" width="154" height="25" fill="url(#thumb)" stroke="#ddd"/><path d="M1333.500 876v12M1336.500 876v12M1339.500 876v12" stroke="#bbb"/>
<rect x="1415" y="869" width="26" height="25" fill="#fff"/><path d="M1414.500 869v25" stroke="#ccc"/><path d="M1426 875v12l6-6z" fill="#333"/>
<rect x="46" y="876" width="15" height="12" fill="#dff0ff" stroke="#1a66b8" stroke-width="1.500"/><path d="M48 886l3-4 2 2 5-6" stroke="#d33" fill="none"/><path d="M52 879c1-4 4-4 7-4v-3l4 4.500-4 4.500v-3c-3 0-5 0-7 1z" fill="#4cb848" stroke="#2a8a2a" stroke-width=".6"/>
<rect x="72" y="872" width="13" height="10" fill="#cfe0f5" stroke="#9db8dc"/><rect x="76" y="875" width="13" height="10" fill="#dbe8f8" stroke="#7fa3d0"/><rect x="81" y="880" width="12" height="10" fill="#fff" stroke="#1a55a8" stroke-width="1.400"/><path d="M83 888l3-4 2 2 3-4" stroke="#2a2" fill="none"/>
<path d="M103 873h16v16h-16z" fill="#333"/><rect x="106" y="874" width="10" height="6" fill="#eee"/><rect x="106" y="884" width="10" height="5" fill="#ddd"/><rect x="108" y="885" width="3" height="3" fill="#333"/>
<rect x="1458" y="883" width="5" height="6" fill="#d44" stroke="#444"/><rect x="1464" y="877" width="6" height="12" fill="#2db52d" stroke="#333"/><path d="M1456 889l9-8c-1-3 0-4 2-5l-1 3 2 2 3-1c-1 2-3 3-5 2l-8 8z" fill="#fff" stroke="#666"/>
<circle cx="1490" cy="878.500" r="5.500" fill="#e4e4e4" stroke="#555" stroke-width="1.500"/><path d="M1494 882.500l6 6" stroke="#222" stroke-width="2.600"/><path d="M1499 874v9M1482 887.500h9" stroke="#22f" stroke-width="1.200"/><path d="M1497 876l2-2 2 2M1497 881l2 2 2-2M1484 885.500l-2 2 2 2M1489 885.500l2 2-2 2" stroke="#22f" fill="none"/>
<circle cx="1518" cy="879" r="5.500" fill="#fff" stroke="#222" stroke-width="1.500"/><path d="M1522 883l6 6" stroke="#111" stroke-width="3"/><path d="M1515 879h6" stroke="#00d" stroke-width="2"/>
<circle cx="1547" cy="879" r="5.500" fill="#fff" stroke="#222" stroke-width="1.500"/><path d="M1551 883l6 6" stroke="#111" stroke-width="3"/><path d="M1544 879h6M1547 876v6" stroke="#00d" stroke-width="2"/>
<path d="M1566.500 873v16" stroke="#ddd"/>
<g fill="#2a6fe0"><path d="M1581 880H1575L1581 874Z"/><path d="M1584 880H1590L1584 874Z"/><path d="M1581 882H1575L1581 888Z"/><path d="M1584 882H1590L1584 888Z"/></g>
<path d="M1573.500 872.500l4 4M1591.500 872.500l-4 4M1573.500 889.500l4-4M1591.500 889.500l-4-4" stroke="#2a6fe0" stroke-width="2.400"/>
</svg>
</body></html>
